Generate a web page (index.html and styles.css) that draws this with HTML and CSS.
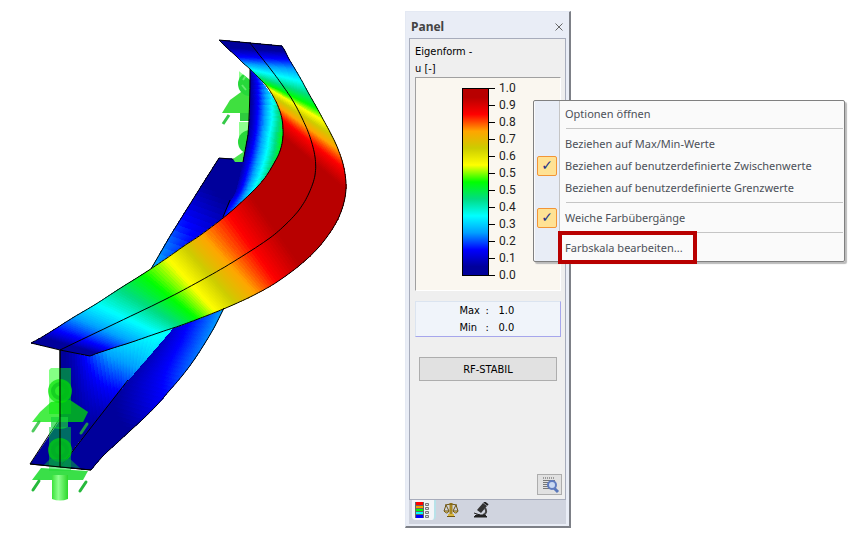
FILE: index.html
```html
<!DOCTYPE html>
<html lang="de">
<head>
<meta charset="utf-8">
<title>Panel</title>
<link rel="stylesheet" href="styles.css">
</head>
<body>
<main class="workspace">
  <svg class="model" viewBox="0 0 405 540" role="img" aria-label="Eigenform">
    <defs>
      <linearGradient id="tube"><stop offset="0" stop-color="#3be33b"/><stop offset=".4" stop-color="#8dff8d"/><stop offset="1" stop-color="#2bd82b"/></linearGradient>
      <g id="support">
        <path d="M49 370l2-2h20v46H49z" fill="#00ff00" opacity=".48"/>
        <path d="M51 402L40 412l-8 10h51l5-10-18-12z" fill="#00e600" opacity=".72"/>
        <path d="M60 402l5 20h18l5-10-18-12z" fill="#009a30" opacity=".3"/>
        <circle cx="60" cy="391" r="12" fill="#00e100" opacity=".68"/>
        <circle cx="60" cy="391" r="7" fill="none" stroke="#00b817" stroke-width="4" opacity=".5"/>
        <path d="M39 422l-6 9M87 424l-6 9" stroke="#22bd35" stroke-width="3" stroke-linecap="round" opacity=".8"/>
      </g>
    </defs>
    <clipPath id="behind"><path d="M219 55L250 80V110L249 130L243 162H219z"/></clipPath>
    <g id="flange-far" class="mesh"></g>
    <path class="edge" d="M151 269Q170 235 190 204L219 158L243 160"/>
    <g clip-path="url(#behind)">
      <path d="M239 62h20v25h-20zM239 122h20v22h-20z" fill="#8fff8f"/>
      <path d="M241 92L230 100l-8 13h38V87z" fill="#3fe03f"/>
      <path d="M240 113h15v8h-15z" fill="#2ecc3e"/>
      <circle cx="250" cy="84" r="12" fill="#27d83a"/>
      <path d="M243 80l4-6M242 85l4 5" stroke="#62ec6b" stroke-width="2"/>
      <circle cx="250" cy="142" r="12" fill="#27d83a"/>
      <path d="M246 150l-13 9 2 3h22v-12z" fill="#4ae44e"/>
      <path d="M229 115l-6 9" stroke="#35c948" stroke-width="3"/>
    </g>
    <g id="web-far" class="mesh"></g>
    <path class="edge" d="M250 69Q250 110 248 135L243 162M230 200L223 217"/>
    <path d="M30 464L60 420V467z" fill="#00009b"/>
    <path class="edge" d="M60 418L30 464"/>
    <g id="flange-near" class="mesh"></g>
    <g id="web-near" class="mesh"></g>
    <path class="edge" d="M60 350V467M60 467L72 452L128 380M30 464L60 467L91 470"/>
    <use href="#support"/>
    <path d="M51 417h17v10q-8 4-17 0z" fill="#16d43b" opacity=".7"/>
    <path d="M49 427h22v44H49z" fill="#00d830" opacity=".5"/>
    <circle cx="60" cy="450" r="12" fill="#00e100" opacity=".65"/>
    <circle cx="60" cy="450" r="7" fill="none" stroke="#00a827" stroke-width="4" opacity=".5"/>
    <path d="M50 459l-6 6 36 3-10-9z" fill="#009c42" opacity=".6"/>
    <path d="M41 468l-9 12h51l5-9z" fill="#25dc34" opacity=".9"/>
    <path d="M52 475h16v24q-8 3-16 0z" fill="url(#tube)"/>
    <path d="M39 481l-6 9M86 482l-6 9" stroke="#26b93b" stroke-width="3" stroke-linecap="round"/>
    <path class="edge" d="M60 350V467M30 464L91 470"/>
    <g id="flange-top" class="mesh"></g>
    <g id="flange-lines"></g>
  </svg>

  <section class="panel">
    <header class="titlebar">
      <h1>Panel</h1>
      <button class="close" aria-label="Schließen"><svg viewBox="0 0 8 8"><path d="M.5 .5l7 7M7.500 .5l-7 7"/></svg></button>
    </header>
    <div class="content">
      <p class="caption">Eigenform -</p>
      <p class="caption">u [-]</p>
      <div class="legend">
        <div class="bar"></div>
        <ol class="scale">
          <li>1.0</li><li>0.9</li><li>0.8</li><li>0.7</li><li>0.6</li><li>0.5</li>
          <li>0.5</li><li>0.4</li><li>0.3</li><li>0.2</li><li>0.1</li><li>0.0</li>
        </ol>
      </div>
      <dl class="range">
        <dt>Max</dt><dd>:</dd><dd>1.0</dd>
        <dt>Min</dt><dd>:</dd><dd>0.0</dd>
      </dl>
      <button class="module">RF-STABIL</button>
      <button class="find" aria-label="Details">
        <svg viewBox="0 0 20 18"><path d="M3 2h12" stroke="#555" stroke-dasharray="1 1"/><path d="M3 4.500h12M3 6.500h7M3 8.500h6M3 10.500h6M3 12.500h7" stroke="#777"/><path d="M14 12l4 4" stroke="#5a78ba" stroke-width="3"/><circle cx="12" cy="9" r="4" fill="#c9d9f2" stroke="#5f7cc0" stroke-width="2"/></svg>
      </button>
    </div>
    <nav class="tabs">
      <button class="tab active" aria-label="Farbskala">
        <svg viewBox="0 0 16 16"><path d="M0 0h9v16H0z" fill="#666"/><path d="M1 0h7v3H1z" fill="#f00"/><path d="M1 4h7v2H1z" fill="#ff9a00"/><path d="M1 7h7v2H1z" fill="#0f0"/><path d="M1 10h7v2H1z" fill="#0ff"/><path d="M1 13h7v3H1z" fill="#00f"/><path d="M10.500 1.500h3v2h-3zM10.500 5.500h3v2h-3zM10.500 9.500h3v2h-3zM10.500 13.500h3v2h-3z" fill="#ddd" stroke="#777"/></svg>
      </button>
      <button class="tab" aria-label="Faktoren">
        <svg viewBox="0 0 16 16" fill="none" stroke="#6f5510"><path d="M8 1v12" stroke="#a88722" stroke-width="3"/><path d="M2 3q6-2 12 0M3 3L1 9M3 3l3 6M13 3l-3 6M13 3l2 6M4 14.500h8"/><path d="M1 9h5q-2 4-5 0zM10 9h5q-2 4-5 0z" fill="#f2dc84"/><path d="M5 13h6" stroke="#d9b63c" stroke-width="2"/></svg>
      </button>
      <button class="tab" aria-label="Filter">
        <svg viewBox="0 0 16 16"><path d="M10 1l4 3-6 7-4-3z" fill="#333"/><path d="M11 0l4 3" stroke="#222" stroke-width="2"/><path d="M12 6q3 5-2 7" fill="none" stroke="#444" stroke-width="2"/><path d="M1 11l6 2M1 15l2-2h9l2 2z" fill="#222" stroke="#222"/></svg>
      </button>
    </nav>

    <menu class="menu">
      <li><button>Optionen öffnen</button></li>
      <li class="group"><button>Beziehen auf Max/Min-Werte</button></li>
      <li><button class="checked">Beziehen auf benutzerdefinierte Zwischenwerte</button></li>
      <li><button>Beziehen auf benutzerdefinierte Grenzwerte</button></li>
      <li class="group"><button class="checked">Weiche Farbübergänge</button></li>
      <li class="group"><button class="marked">Farbskala bearbeiten...</button></li>
    </menu>
  </section>
</main>
<script src="model.js"></script>
</body>
</html>
```
FILE: styles.css
```css
*, *::before, *::after { box-sizing: border-box; }
body { margin: 0; background: #fff; font: 11px/17px "DejaVu Sans Condensed", "Noto Sans", sans-serif; color: #000; }
h1, p, dl, dd, ol, menu { margin: 0; padding: 0; list-style: none; }
button { font: inherit; color: inherit; padding: 0; border: 0; background: none; }

.workspace { display: grid; grid-template-columns: minmax(0, 405fr) minmax(166px, 166fr) 295fr; align-items: start; }
.model { display: block; width: 100%; }
.mesh { shape-rendering: crispEdges; }
.edge { fill: none; stroke: #000; stroke-width: 1; }

.panel { position: relative; margin-top: 11px; padding: 2px 3px; background: #e9edf6; border: 1px solid #e4e9f3; border-right: 2px solid #7d8087; border-bottom: 2px solid #7d8087; }
.titlebar { display: flex; justify-content: space-between; align-items: center; height: 24px; padding: 2px 3px 0 2px; }
.titlebar h1 { font: bold 12px/20px "Noto Sans", sans-serif; color: #444; }
.close { width: 8px; }
.close svg { display: block; width: 8px; fill: none; stroke: #666; }

.content { display: flex; flex-direction: column; height: 462px; padding: 4px 3px 4px 5px; background: #efefef; border: 1px solid #a7acbb; }
.caption { height: 17px; }
.legend { display: flex; height: 214px; margin-right: 1px; padding: 10px 0 0 46px; background: #faf7f0; border: 1px solid #a0a0a0; border-right-color: #fff; border-bottom-color: #fff; }
.bar { width: 27px; height: 188px; border: 1px solid #000; background: linear-gradient(#b80000 4.500%, #f00 13.600%, #ffa500 22.700%, #cccc00 31.800%, #ff0 40.900%, #0f0 50%, #00dc82 59.100%, #0ff 68.200%, #00a0ff 77.300%, #00f 86.400%, #00009b 95.500%); }
.scale { margin-top: -8px; font: 12px/17px Roboto, sans-serif; color: #222; }
.scale li { display: flex; align-items: center; gap: 4px; }
.scale li::before { content: ""; width: 6px; height: 1px; background: #000; }
.range { display: grid; grid-template-columns: 26px 13px 18px; justify-content: center; height: 36px; margin: 10px 1px 0 0; background: #f0f4fa; border: 1px solid #dbe4f0; border-right-color: #a6a6ec; border-bottom-color: #a6a6ec; }
.module { height: 24px; margin: 20px 5px 0 4px; background: #e1e1e1; border: 1px solid #adadad; }
.find { width: 25px; height: 21px; margin: auto 0 0 auto; background: #e1e1e1; border: 1px solid #adadad; }
.find svg { display: block; width: 20px; margin: 0 auto; fill: none; }

.tabs { display: flex; height: 24px; padding-left: 3px; background: #d0d4df; }
.tab { width: 30px; height: 20px; }
.tab svg { display: block; width: 16px; margin: 0 auto; }
.tab.active { width: 24px; background: #f3f5f8; border-right: 2px solid #b8e2e9; border-radius: 0 0 4px 4px; }

.menu { position: absolute; top: 88px; left: 127px; width: 312px; padding: 2px 1px; border: 1px solid #808080; border-radius: 2px; background: linear-gradient(90deg, #fafafa 1px, #e8edf6 1px 25px, #c5c5c5 25px 26px, #fafafa 26px); box-shadow: 2px 2px 1px #bbb; color: #4c5058; font: 11px/22px "Noto Sans", sans-serif; }
.menu button { position: relative; display: block; width: 100%; height: 22px; padding-left: 30px; text-align: left; white-space: nowrap; }
.group { padding-top: 8px; background: linear-gradient(#c5c5c5, #c5c5c5) 31px 3px / 100% 1px no-repeat; }
.checked::before { content: "✓"; position: absolute; left: 2px; top: 1px; width: 20px; height: 20px; border: 1px solid #f29536; border-radius: 2px; background: #ffe294; color: #263586; font: bold 14px/17px "DejaVu Sans", sans-serif; text-align: center; }
.marked::after { content: ""; position: absolute; left: 23px; top: -6px; width: 139px; height: 33px; border: 4px solid #b80000; }
```
FILE: model.js
```js
// Colour scale stops: value and RGB, in the order of the legend.
const STOPS = [
  [.045, 0, 0, 155], [.136, 0, 0, 255], [.227, 0, 160, 255], [.318, 0, 255, 255],
  [.409, 0, 220, 130], [.5, 0, 255, 0], [.591, 255, 255, 0], [.682, 204, 204, 0],
  [.773, 255, 165, 0], [.864, 255, 0, 0], [.955, 184, 0, 0]
];
function colour(v) {
  if (v <= STOPS[0][0]) return "rgb(0,0,155)";
  for (let i = 1; i < STOPS.length; i++) {
    const a = STOPS[i - 1], b = STOPS[i];
    if (v <= b[0]) {
      const f = (v - a[0]) / (b[0] - a[0]);
      return `rgb(${[1, 2, 3].map(k => Math.round(a[k] + (b[k] - a[k]) * f))})`;
    }
  }
  return "rgb(184,0,0)";
}
// Smooth curve through nodes [x, y, value], sampled n times per span.
function curve(p, n) {
  const out = [];
  for (let i = 0; i < p.length - 1; i++) {
    const a = p[i - 1] || p[i], b = p[i], c = p[i + 1], d = p[i + 2] || c;
    for (let j = 0; j < n; j++) {
      const t = j / n;
      const q = [0, 1].map(k => .5 * (2 * b[k] + (c[k] - a[k]) * t
        + (2 * a[k] - 5 * b[k] + 4 * c[k] - d[k]) * t * t
        + (3 * b[k] - a[k] - 3 * c[k] + d[k]) * t * t * t));
      out.push([...q, b[2] + (c[2] - b[2]) * t]);
    }
  }
  out.push(p[p.length - 1]);
  return out;
}
const mix = (a, b, f) => a.map((x, k) => x + (b[k] - x) * f);
// Fill the surface between two edges with coloured cells.
function surface(id, left, right, n, across) {
  const l = curve(left, n), r = curve(right, n);
  let s = "";
  for (let i = 0; i < l.length - 1; i++) for (let j = 0; j < across; j++) {
    const f = j / across, g = (j + 1) / across;
    const q = [mix(l[i], r[i], f), mix(l[i], r[i], g), mix(l[i + 1], r[i + 1], g), mix(l[i + 1], r[i + 1], f)];
    const c = colour((q[0][2] + q[1][2] + q[2][2] + q[3][2]) / 4);
    s += `<path d="M${q.map(p => p[0].toFixed(2) + " " + p[1].toFixed(2)).join("L")}z" fill="${c}" stroke="${c}" stroke-width=".8"/>`;
  }
  document.getElementById(id).innerHTML = s;
}
const line = p => "M" + curve(p.map(q => [q[0], q[1], 0]), 8).map(q => q[0].toFixed(1) + " " + q[1].toFixed(1)).join("L");

const V = [0, .045, .136, .227, .318, .409, .5, .591, .682, .773, .864, .955, .98, 1, .98,
  .955, .864, .773, .682, .591, .5, .409, .318, .227, .136, .045, 0];
const withValues = pts => pts.map((p, i) => [...p, V[i]]);
const topLeft = withValues([[31,343],[42,337],[55,329],[74,317],[96,304],[119,289],[143,274],[167,258],[184,246],[202,234],[228,214],[250,194],
  [264,179],[273,165],[280,151],[283,136],[282,119],[278,106],[273,96],[268,88],[263,82],[257,76],[250,69],[243,63],[236,56],[226,47],[219,40]]);
const topRight = withValues([[90,356],[98,353],[110,349],[132,342],[158,333],[179,326],[198,319],[216,312],[235,304],[256,294],[277,282],[300,265],
  [318,248],[333,228],[342,209],[346,189],[344,168],[338,149],[331,134],[324,121],[317,108],[309,94],[302,81],[295,69],[289,59],[285,51],[282,46]]);
const middle = [[60,350],[110,326],[164,300],[200,281],[233,262],[267,240],[284,226],[299,210],[309,193],[315,175],[315,157],[310,137],[302,118],[293,101],[283,86],[272,71],[261,57],[250,43]];
const nearOuter = [[91,470,0],[103,456,.01],[117,443,.02],[130,431,.04],[143,419,.08],[157,405,.12],[170,390,.15],[182,376,.18],[194,360,.2],[205,343,.21],[215,326,.22],[224,308,.23]];

surface("flange-far",
  [[219,158,0],[205,180,.04],[190,204,.1],[170,236,.19],[151,269,.25]],
  [[244,160,0],[239,189,0],[226,217,.06],[190,243,.14],[151,269,.25]], 6, 20);
surface("web-far",
  [[250,69,.03],[250,85,.03],[250,110,.03],[248,135,.04],[243,162,.05],[237,189,.07],[230,203,.1],[223,217,.12]],
  [[250,69,.08],[264,85,.2],[280,111,.42],[283,138,.5],[273,165,.44],[254,190,.32],[240,204,.22],[223,217,.13]], 5, 32);
surface("flange-near",
  [[60,467,0],[72,452,0],[84,436,.01],[95,421,.02],[106,408,.03],[117,394,.045],[128,380,.06],[140,366,.065],[152,352,.07],[164,338,.08],[176,325,.1],[195,305,.12]],
  nearOuter, 4, 24);
surface("web-near",
  [[60,350,.02],[75,353,.08],[90,356,.16],[110,349,.25],[132,342,.29],[158,333,.33],[173,328,.33]],
  [[60,467,0],[78,443,.03],[98,418,.06],[116,395,.12],[130,378,.19],[150,355,.28],[173,328,.33]], 6, 32);
surface("flange-top", topLeft, topRight, 10, 1);
document.getElementById("flange-lines").innerHTML =
  `<path class="edge" d="${line(topLeft)}L250 43L282 46"/><path class="edge" d="${line(topRight)}"/>`
  + `<path class="edge" d="${line(middle)}M31 343L60 350L90 356"/><path class="edge" d="${line(nearOuter)}"/>`;
```
